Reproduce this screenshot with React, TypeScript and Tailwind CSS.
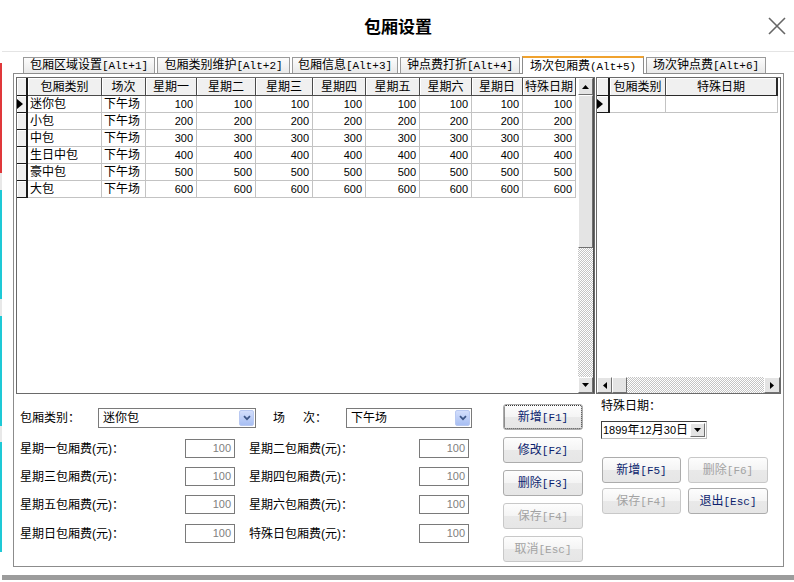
import React from 'react';

const MONO = "font-['Liberation_Mono',monospace] text-[11px]";

// text + half-width shortcut part, e.g. 新增 + [F1]
function Mix({ cn, en }: { cn: string; en: string }) {
  return (
    <span className="whitespace-nowrap leading-none">
      {cn}
      <span className={MONO}>{en}</span>
    </span>
  );
}

const strip = [
  { h: 'h-[63px]', c: 'bg-white' },
  { h: 'h-[110px]', c: 'bg-[#e0383a]' },
  { h: 'h-[17px]', c: 'bg-[#e8e8e8]' },
  { h: 'h-[109px]', c: 'bg-[#1ec9d6]' },
  { h: 'h-[17px]', c: 'bg-[#e8e8e8]' },
  { h: 'h-[110px]', c: 'bg-[#1ec9d6]' },
  { h: 'h-[16px]', c: 'bg-[#e8e8e8]' },
  { h: 'h-[110px]', c: 'bg-[#1ec9d6]' },
];

const tabs = [
  { cn: '包厢区域设置', en: '[Alt+1]', w: 'w-[132px]' },
  { cn: '包厢类别维护', en: '[Alt+2]', w: 'w-[133px]' },
  { cn: '包厢信息', en: '[Alt+3]', w: 'w-[106px]' },
  { cn: '钟点费打折', en: '[Alt+4]', w: 'w-[120px]' },
  { cn: '场次包厢费', en: '(Alt+5)', w: 'w-[122px]', active: true },
  { cn: '场次钟点费', en: '[Alt+6]', w: 'w-[120px]' },
];

const cols = [
  { t: '包厢类别', w: 'w-[74px]' },
  { t: '场次', w: 'w-[44px]' },
  { t: '星期一', w: 'w-[51px]' },
  { t: '星期二', w: 'w-[59px]' },
  { t: '星期三', w: 'w-[57px]' },
  { t: '星期四', w: 'w-[53px]' },
  { t: '星期五', w: 'w-[54px]' },
  { t: '星期六', w: 'w-[52px]' },
  { t: '星期日', w: 'w-[51px]' },
  { t: '特殊日期', w: 'w-[53px]' },
];

const rows: [string, number][] = [
  ['迷你包', 100],
  ['小包', 200],
  ['中包', 300],
  ['生日中包', 400],
  ['豪中包', 500],
  ['大包', 600],
];

const fees = [
  ['星期一包厢费(元)：', '星期二包厢费(元)：', 'mt-[11px]'],
  ['星期三包厢费(元)：', '星期四包厢费(元)：', 'mt-[9px]'],
  ['星期五包厢费(元)：', '星期六包厢费(元)：', 'mt-[9px]'],
  ['星期日包厢费(元)：', '特殊日包厢费(元)：', 'mt-[10px]'],
];

const raised = 'bg-[#e4e4e4] border border-t-white border-l-white border-r-[#707070] border-b-[#707070]';
const checker = 'bg-[repeating-conic-gradient(#c4c4c4_0%_25%,#ffffff_0%_50%)] bg-[length:2px_2px]';

function Arrow({ dir }: { dir: 'up' | 'down' | 'left' | 'right' }) {
  const d = {
    up: 'M0 4 L3.5 0 L7 4Z',
    down: 'M0 0 L7 0 L3.5 4Z',
    left: 'M4 0 L4 7 L0 3.5Z',
    right: 'M0 0 L4 3.5 L0 7Z',
  }[dir];
  const vertical = dir === 'up' || dir === 'down';
  return (
    <svg width={vertical ? 7 : 4} height={vertical ? 4 : 7} viewBox={vertical ? '0 0 7 4' : '0 0 4 7'}>
      <path d={d} fill="#000" />
    </svg>
  );
}

function Pointer() {
  return (
    <svg width="6" height="10" viewBox="0 0 6 10">
      <path d="M0 0 L6 5 L0 10Z" fill="#000" />
    </svg>
  );
}

function BlueDrop() {
  return (
    <div className="w-[15px] h-[16px] rounded-[2px] border border-[#b9c9f2] bg-linear-to-b from-[#d3defb] to-[#a8bff3] flex items-center justify-center">
      <svg width="8" height="6" viewBox="0 0 8 6">
        <path d="M1 1.2 L4 4.2 L7 1.2" stroke="#3d5687" strokeWidth="1.7" fill="none" />
      </svg>
    </div>
  );
}

function Combo({ value, w }: { value: string; w: string }) {
  return (
    <div className={`${w} h-[20px] border border-[#7a7a7a] bg-white flex items-center pl-[4px] pr-[1px]`}>
      <span className="flex-1 leading-none">{value}</span>
      <BlueDrop />
    </div>
  );
}

function Fee() {
  return (
    <div className="w-[50px] h-[19px] shrink-0 border border-[#7a7a7a] bg-white flex items-center justify-end pr-[3px] text-[11px] text-[#808080] font-['Liberation_Sans',sans-serif]">
      100
    </div>
  );
}

function WinBtn({ cn, en, off, focus, w }: { cn: string; en: string; off?: boolean; focus?: boolean; w: string }) {
  return (
    <div
      className={`${w} h-[26px] shrink-0 rounded-[3px] border ${off ? 'border-[#c8c8c8] text-[#a3a3a3]' : 'border-[#acacac] text-[#0c1f6e]'} ${focus ? 'outline-1 outline-dotted outline-[#333] -outline-offset-2' : ''} bg-[linear-gradient(#fdfdfd,#f4f4f4_50%,#e9e9e9_51%,#e6e6e6)] flex items-center justify-center`}
    >
      <Mix cn={cn} en={en} />
    </div>
  );
}

function MainGrid() {
  return (
    <div className="w-[579px] h-[317px] shrink-0 border border-[#6a6a6a] flex">
      <div className="w-[561px] flex flex-col">
        <div className="h-[18px] flex">
          <div className="w-[11px] shrink-0 bg-[#f0f0f0] border-r-2 border-b border-[#1a1a1a] shadow-[inset_1px_1px_0_#ffffff]" />
          {cols.map((c) => (
            <div
              key={c.t}
              className={`${c.w} shrink-0 bg-[#f0f0f0] border-r border-b border-[#4a4a4a] shadow-[inset_1px_1px_0_#ffffff] flex items-center justify-center leading-none`}
            >
              {c.t}
            </div>
          ))}
        </div>
        {rows.map(([name, v], i) => (
          <div key={name} className="h-[17px] flex">
            <div className="w-[11px] shrink-0 bg-[#f0f0f0] border-r-2 border-b border-[#1a1a1a] shadow-[inset_1px_1px_0_#ffffff] flex items-center">
              {i === 0 && <Pointer />}
            </div>
            <div className="w-[74px] shrink-0 border-r border-b border-[#c3c3c3] flex items-center pl-[2px] leading-none">{name}</div>
            <div className="w-[44px] shrink-0 border-r border-b border-[#c3c3c3] flex items-center pl-[2px] leading-none">下午场</div>
            {cols.slice(2).map((c) => (
              <div
                key={c.t}
                className={`${c.w} shrink-0 border-r border-b border-[#c3c3c3] flex items-center justify-end pr-[3px] text-[11px] font-['Liberation_Sans',sans-serif]`}
              >
                {v}
              </div>
            ))}
          </div>
        ))}
      </div>
      <div className="w-[16px] flex flex-col border-r border-[#505050]">
        <div className={`h-[17px] ${raised} flex items-center justify-center`}>
          <Arrow dir="up" />
        </div>
        <div className={`h-[153px] ${raised} bg-[#c9c9c9]`} />
        <div className={`flex-1 ${checker}`} />
        <div className={`h-[16px] ${raised} flex items-center justify-center`}>
          <Arrow dir="down" />
        </div>
      </div>
    </div>
  );
}

function DateGrid() {
  return (
    <div className="w-[185px] h-[317px] shrink-0 border border-[#6a6a6a] flex flex-col">
      <div className="h-[18px] flex">
        <div className="w-[13px] shrink-0 bg-[#f0f0f0] border-r-2 border-b border-[#1a1a1a] shadow-[inset_1px_1px_0_#ffffff]" />
        <div className="w-[56px] shrink-0 bg-[#f0f0f0] border-r border-b border-[#4a4a4a] shadow-[inset_1px_1px_0_#ffffff] flex items-center justify-center leading-none">
          包厢类别
        </div>
        <div className="w-[112px] shrink-0 bg-[#f0f0f0] border-r-2 border-b border-[#2a2a2a] shadow-[inset_1px_1px_0_#ffffff] flex items-center justify-center leading-none">
          特殊日期
        </div>
      </div>
      <div className="h-[17px] flex">
        <div className="w-[13px] shrink-0 bg-[#f0f0f0] border-r-2 border-b border-[#1a1a1a] shadow-[inset_1px_1px_0_#ffffff] flex items-center">
          <Pointer />
        </div>
        <div className="w-[56px] shrink-0 border-r border-b border-[#c3c3c3]" />
        <div className="w-[112px] shrink-0 border-r border-b border-[#c3c3c3]" />
      </div>
      <div className="flex-1" />
      <div className="h-[16px] flex">
        <div className={`w-[15px] ${raised} flex items-center justify-center`}>
          <Arrow dir="left" />
        </div>
        <div className={`w-[15px] ${raised} bg-[#c9c9c9]`} />
        <div className={`flex-1 ${checker}`} />
        <div className={`w-[16px] ${raised} flex items-center justify-center`}>
          <Arrow dir="right" />
        </div>
      </div>
    </div>
  );
}

export default function App() {
  return (
    <div className="w-[794px] h-[582px] bg-white flex overflow-hidden text-[12px] text-black font-['Liberation_Sans','Noto_Sans_CJK_SC',sans-serif]">
      <div className="w-[2px] flex flex-col">
        {strip.map((s, i) => (
          <div key={i} className={`${s.h} ${s.c}`} />
        ))}
      </div>

      <div className="flex-1 flex flex-col">
        {/* title */}
        <div className="h-[52px] border-b border-[#e4e4e4] flex items-center">
          <div className="w-[40px]" />
          <div className="flex-1 text-center text-[17px] font-bold font-['Noto_Sans_CJK_SC',sans-serif] leading-none">包厢设置</div>
          <div className="w-[40px] flex justify-end pr-[8px]">
            <svg width="18" height="18" viewBox="0 0 18 18">
              <path d="M1 1 L17 17 M17 1 L1 17" stroke="#666" strokeWidth="1.6" />
            </svg>
          </div>
        </div>

        {/* tabs */}
        <div className="h-[21px] flex items-end gap-[2px] pl-[21px]">
          {tabs.map((t) =>
            t.active ? (
              <div
                key={t.cn}
                className={`${t.w} h-[18px] -mb-px relative z-10 bg-white border border-b-0 border-[#8c8c8c] border-t-2 border-t-[#f0a22e] flex items-center justify-center`}
              >
                <Mix cn={t.cn} en={t.en} />
              </div>
            ) : (
              <div
                key={t.cn}
                className={`${t.w} h-[16px] border border-b-0 border-[#9a9a9a] bg-linear-to-b from-[#fcfcfc] to-[#e9e9e9] flex items-center justify-center`}
              >
                <Mix cn={t.cn} en={t.en} />
              </div>
            )
          )}
        </div>

        {/* panel */}
        <div className="ml-[11px] w-[771px] h-[494px] border border-[#8c8c8c] flex flex-col">
          <div className="flex gap-[1px] pl-[2px] pt-[3px]">
            <MainGrid />
            <DateGrid />
          </div>

          <div className="flex">
            <div className="w-[489px] pl-[6px] pt-[14px] flex flex-col">
              <div className="h-[20px] flex items-center">
                <div className="w-[78px] leading-none">包厢类别：</div>
                <Combo value="迷你包" w="w-[158px]" />
                <div className="w-[17px]" />
                <div className="w-[73px] leading-none flex">
                  场<span className="inline-block w-[18px]" />次：
                </div>
                <Combo value="下午场" w="w-[126px]" />
              </div>
              {fees.map(([a, b, m]) => (
                <div key={a} className={`h-[19px] flex items-center ${m}`}>
                  <div className="w-[165px] leading-none">{a}</div>
                  <Fee />
                  <div className="w-[14px]" />
                  <div className="w-[170px] leading-none">{b}</div>
                  <Fee />
                </div>
              ))}
            </div>

            <div className="w-[80px] pt-[10px] flex flex-col gap-[7px]">
              <WinBtn cn="新增" en="[F1]" focus w="w-[80px]" />
              <WinBtn cn="修改" en="[F2]" w="w-[80px]" />
              <WinBtn cn="删除" en="[F3]" w="w-[80px]" />
              <WinBtn cn="保存" en="[F4]" off w="w-[80px]" />
              <WinBtn cn="取消" en="[Esc]" off w="w-[80px]" />
            </div>

            <div className="ml-[18px] pt-[6px] flex flex-col">
              <div className="h-[14px] leading-none">特殊日期：</div>
              <div className="mt-[7px] w-[106px] h-[18px] border border-t-[#404040] border-l-[#404040] border-r-[#bdbdbd] border-b-[#bdbdbd] bg-white flex items-center pl-[1px] pr-[1px]">
                <span className="flex-1 leading-none whitespace-nowrap overflow-hidden text-[11px]">
                  1899<span className="text-[12px]">年</span>12<span className="text-[12px]">月</span>30<span className="text-[12px]">日</span>
                </span>
                <div className={`w-[15px] h-[14px] shrink-0 ${raised} flex items-center justify-center`}>
                  <Arrow dir="down" />
                </div>
              </div>
              <div className="mt-[18px] ml-[1px] grid grid-cols-[79px_80px] gap-x-[7px] gap-y-[5px]">
                <WinBtn cn="新增" en="[F5]" w="w-[79px]" />
                <WinBtn cn="删除" en="[F6]" off w="w-[80px]" />
                <WinBtn cn="保存" en="[F4]" off w="w-[79px]" />
                <WinBtn cn="退出" en="[Esc]" w="w-[80px]" />
              </div>
            </div>
          </div>
        </div>

        <div className="flex-1" />
        <div className="h-[5px] bg-[#9c9c9c]" />
        <div className="h-[2px] bg-white" />
      </div>
    </div>
  );
}
